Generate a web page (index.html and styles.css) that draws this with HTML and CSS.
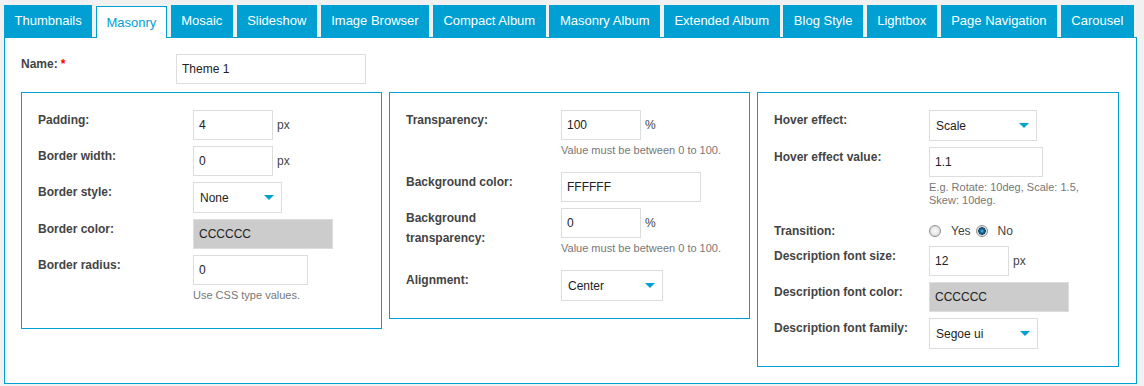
FILE: index.html
```html
<!DOCTYPE html>
<html lang="en">
<head>
<meta charset="utf-8">
<title>Theme options</title>
<link rel="stylesheet" href="styles.css">
</head>
<body>
<div class="page">
  <nav class="tabs">
    <a class="tab" href="#">Thumbnails</a>
    <a class="tab active" href="#">Masonry</a>
    <a class="tab" href="#">Mosaic</a>
    <a class="tab" href="#">Slideshow</a>
    <a class="tab" href="#">Image Browser</a>
    <a class="tab" href="#">Compact Album</a>
    <a class="tab" href="#">Masonry Album</a>
    <a class="tab" href="#">Extended Album</a>
    <a class="tab" href="#">Blog Style</a>
    <a class="tab" href="#">Lightbox</a>
    <a class="tab" href="#">Page Navigation</a>
    <a class="tab" href="#">Carousel</a>
  </nav>
  <div class="box">
    <div class="row name-row">
      <label class="lbl">Name:<span class="req">*</span></label>
      <div class="ctl"><input class="inp w190" type="text" value="Theme 1"></div>
    </div>
    <div class="panels">
      <section class="panel">
        <div class="row">
          <label class="lbl">Padding:</label>
          <div class="ctl"><input class="inp w80" type="text" value="4"><span class="unit">px</span></div>
        </div>
        <div class="row">
          <label class="lbl">Border width:</label>
          <div class="ctl"><input class="inp w80" type="text" value="0"><span class="unit">px</span></div>
        </div>
        <div class="row">
          <label class="lbl">Border style:</label>
          <div class="ctl"><div class="sel w89"><span>None</span><span class="caret"></span></div></div>
        </div>
        <div class="row">
          <label class="lbl">Border color:</label>
          <div class="ctl"><input class="inp w140 color" type="text" value="CCCCCC"></div>
        </div>
        <div class="row">
          <label class="lbl">Border radius:</label>
          <div class="ctl"><input class="inp w115" type="text" value="0"><div class="note">Use CSS type values.</div></div>
        </div>
      </section>
      <section class="panel">
        <div class="row">
          <label class="lbl">Transparency:</label>
          <div class="ctl"><input class="inp w80" type="text" value="100"><span class="unit">%</span><div class="note">Value must be between 0 to 100.</div></div>
        </div>
        <div class="row">
          <label class="lbl">Background color:</label>
          <div class="ctl"><input class="inp w140" type="text" value="FFFFFF"></div>
        </div>
        <div class="row">
          <label class="lbl">Background transparency:</label>
          <div class="ctl"><input class="inp w80" type="text" value="0"><span class="unit">%</span><div class="note">Value must be between 0 to 100.</div></div>
        </div>
        <div class="row">
          <label class="lbl">Alignment:</label>
          <div class="ctl"><div class="sel w102"><span>Center</span><span class="caret"></span></div></div>
        </div>
      </section>
      <section class="panel">
        <div class="row">
          <label class="lbl">Hover effect:</label>
          <div class="ctl"><div class="sel w108"><span>Scale</span><span class="caret"></span></div></div>
        </div>
        <div class="row">
          <label class="lbl">Hover effect value:</label>
          <div class="ctl"><input class="inp w114" type="text" value="1.1"><div class="note">E.g. Rotate: 10deg, Scale: 1.5, Skew: 10deg.</div></div>
        </div>
        <div class="row short">
          <label class="lbl">Transition:</label>
          <div class="ctl radios">
            <input class="radio" type="radio" name="transition" id="t-yes"><label class="opt" for="t-yes">Yes</label>
            <input class="radio" type="radio" name="transition" id="t-no" checked><label class="opt" for="t-no">No</label>
          </div>
        </div>
        <div class="row">
          <label class="lbl">Description font size:</label>
          <div class="ctl"><input class="inp w80" type="text" value="12"><span class="unit">px</span></div>
        </div>
        <div class="row">
          <label class="lbl">Description font color:</label>
          <div class="ctl"><input class="inp w140 color" type="text" value="CCCCCC"></div>
        </div>
        <div class="row">
          <label class="lbl">Description font family:</label>
          <div class="ctl"><div class="sel w109"><span>Segoe ui</span><span class="caret"></span></div></div>
        </div>
      </section>
    </div>
  </div>
</div>
</body>
</html>
```

FILE: styles.css
```css
html, body {
  margin: 0;
  background: #f1f1f1;
  font-family: "Liberation Sans", Arial, sans-serif;
}

.page {
  padding: 5px 7px 0 4px;
}

.tabs {
  display: flex;
  align-items: flex-end;
  gap: 3.8px;
  height: 32px;
  position: relative;
  z-index: 1;
}

.tab {
  box-sizing: border-box;
  height: 32px;
  line-height: 32px;
  padding: 0 10.5px;
  background: #00a0d2;
  color: #fff;
  font-size: 13px;
  white-space: nowrap;
  text-decoration: none;
}

.tab.active {
  background: #fff;
  color: #00a0d2;
  border: 1px solid #00a0d2;
  border-bottom: 0;
  line-height: 31px;
  padding: 0 9.5px;
  margin-bottom: -1px;
}

.box {
  background: #fff;
  border: 1px solid #00a0d2;
  padding: 16px;
}

.row {
  display: grid;
  grid-template-columns: 155px 1fr;
}

.name-row {
  margin-bottom: 8px;
}

.lbl {
  box-sizing: border-box;
  padding-right: 15px;
  font-size: 12px;
  font-weight: bold;
  line-height: 20px;
  color: #444;
}

.req {
  color: #f00;
  margin-left: 3px;
}

.ctl {
  display: flex;
  flex-wrap: wrap;
  align-items: center;
  column-gap: 4px;
}

.inp {
  box-sizing: border-box;
  height: 30px;
  margin: 0;
  border: 1px solid #ddd;
  padding: 0 5px;
  background: #fff;
  font-family: "Liberation Sans", Arial, sans-serif;
  font-size: 12px;
  color: #222;
  outline: none;
}

.inp.color {
  background: #ccc;
}

.w190 { width: 190px; }
.w80 { width: 80px; }
.w140 { width: 140px; }
.w115 { width: 115px; }
.w114 { width: 114px; }
.w89 { width: 89px; }
.w102 { width: 102px; }
.w108 { width: 108px; }
.w109 { width: 109px; }

.unit {
  font-size: 12px;
  color: #444;
}

.note {
  flex-basis: 100%;
  margin: 4px 0 9px;
  font-size: 11px;
  line-height: 13px;
  color: #777;
}

.panels {
  display: grid;
  grid-template-columns: 361px 361px 362px;
  column-gap: 7px;
  align-items: start;
}

.panel {
  box-sizing: border-box;
  border: 1px solid #00a0d2;
  padding: 17px 16px;
  display: flex;
  flex-direction: column;
  gap: 6px;
}

.sel {
  box-sizing: border-box;
  height: 31px;
  display: flex;
  align-items: center;
  justify-content: space-between;
  border: 1px solid #ddd;
  padding: 0 7px 0 6px;
  background: #fff;
  font-size: 12px;
  color: #222;
}

.caret {
  width: 0;
  height: 0;
  border-left: 5px solid transparent;
  border-right: 5px solid transparent;
  border-top: 5px solid #00a0d2;
}

.row.short .lbl {
  line-height: 18px;
}

.radios {
  height: 18px;
  flex-wrap: nowrap;
  column-gap: 0;
}

.radio {
  appearance: none;
  -webkit-appearance: none;
  box-sizing: border-box;
  width: 12px;
  height: 12px;
  margin: 0 10px 0 0;
  border: 1px solid #8e8f8f;
  border-radius: 50%;
  background: radial-gradient(circle at 50% 50%, #fbfbfb 0, #e6e6e6 4px, #d4d4d4 6px);
}

.radio:checked {
  background: radial-gradient(circle at 50% 50%, #6cc2ec 0, #1f78ad 1.5px, #0c3f63 3.5px, #dcdcdc 4px, #f4f4f4 6px);
}

.opt {
  font-size: 12px;
  color: #444;
  line-height: 18px;
  margin-right: 5px;
}
```
